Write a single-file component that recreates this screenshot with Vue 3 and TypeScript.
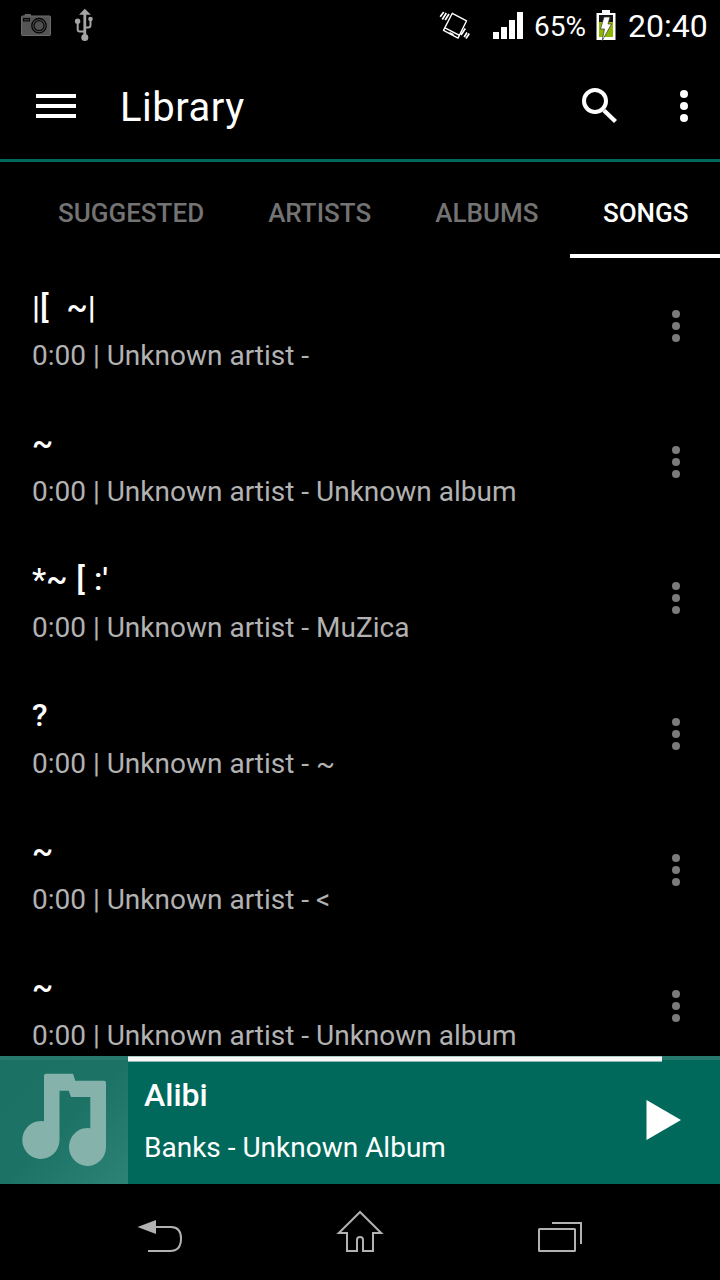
<script setup lang="ts">
interface Song {
  title: string
  detail: string
}

const tabs: string[] = ['SUGGESTED', 'ARTISTS', 'ALBUMS', 'SONGS']
const activeTab = 'SONGS'

const songs: Song[] = [
  { title: '|[  ~|', detail: '0:00 | Unknown artist -' },
  { title: '~', detail: '0:00 | Unknown artist - Unknown album' },
  { title: "*~ [ :'", detail: '0:00 | Unknown artist - MuZica' },
  { title: '?', detail: '0:00 | Unknown artist - ~' },
  { title: '~', detail: '0:00 | Unknown artist - <' },
  { title: '~', detail: '0:00 | Unknown artist - Unknown album' },
]
</script>

<template>
  <div class="screen">
    <header class="status">
      <svg class="status-left" width="110" height="50" viewBox="0 0 110 50">
        <path d="M25 16v-1.500h5.500v1.500" fill="#555" stroke="#666" />
        <rect x="21.500" y="16" width="29" height="19.500" rx="1" fill="#555" stroke="#6c6c6c" />
        <rect x="23.500" y="18.500" width="6" height="2.500" fill="#333" stroke="#080808" />
        <circle cx="39" cy="25.700" r="7.200" fill="#555" stroke="#050505" stroke-width="1.300" />
        <circle cx="39" cy="25.700" r="5" fill="#505050" stroke="#0a0a0a" stroke-width="1.300" />
        <g fill="none" stroke="#a5a5a5" stroke-width="2">
          <path d="M84.800 13v24" stroke-width="2.800" />
          <path d="M77.700 22v7.500q0 2 2 2H84M90.500 20v5q0 2.500-2.500 2.500H85" />
        </g>
        <g fill="#a5a5a5">
          <path d="M84.800 8.800l6 6H79z" />
          <circle cx="84.800" cy="37.500" r="3.500" />
          <circle cx="77.600" cy="21.300" r="2.700" />
          <circle cx="90.500" cy="19" r="2.300" />
        </g>
      </svg>
      <svg class="status-vibrate" width="110" height="50" viewBox="0 0 110 50">
        <g transform="translate(-420 0)" fill="none" stroke="#fff" stroke-width="1.400">
          <path d="M452.300 13.300l14.300 7.500-8.600 17.300-14.500-7.700z" stroke-linejoin="round" />
          <path d="M445 27.800l14.500 7.500M449.500 32.500l4 2.100" />
          <path d="M443.700 12l-3.500 4.800M446.300 13l-4 6.500M449 14l-3.800 6M465.300 28.500l-4.300 6.500M467 32.500l-2.800 4.500M469.300 33.500l-3.300 5" stroke-width="1.700" />
        </g>
        <path d="M73 32h6v7h-6zM81 27h6v12h-6zM89 20h6v19h-6zM97 12h6v27h-6z" fill="#fff" />
      </svg>
      <span class="percent">65%</span>
      <svg class="battery" width="20" height="32" viewBox="0 0 20 32">
        <path d="M6 1h8v3h5.500v27H.500V4H6z" fill="#fff" />
        <path d="M3 6h14v22H3z" fill="#151515" />
        <path d="M3 13h14v15H3z" fill="#8db600" />
        <path d="M8 8h6l-2 7h3.500L6 32l2.500-12H4.500z" fill="#fff" stroke="#333" stroke-width=".7" />
      </svg>
      <span class="clock">20:40</span>
    </header>

    <div class="appbar">
      <svg class="menu" width="40" height="24" viewBox="0 0 40 24">
        <path d="M0 0h40v4H0zM0 10h40v4H0zM0 20h40v4H0z" fill="#fff" />
      </svg>
      <h1>Library</h1>
      <svg class="search" width="36" height="36" viewBox="0 0 36 36" fill="none" stroke="#fff">
        <circle cx="13" cy="13" r="11" stroke-width="4" />
        <path d="M22 22.500L33.500 33.500" stroke-width="4.400" />
      </svg>
      <svg class="more" width="8" height="32" viewBox="0 0 8 32" fill="#fff">
        <circle cx="4" cy="4" r="4" /><circle cx="4" cy="16" r="4" /><circle cx="4" cy="28" r="4" />
      </svg>
    </div>

    <nav class="tabs">
      <span v-for="tab in tabs" :key="tab" class="tab" :class="{ active: tab === activeTab }">{{ tab }}</span>
    </nav>

    <main class="list">
      <div v-for="(song, i) in songs" :key="i" class="row">
        <div class="texts">
          <div class="title">{{ song.title }}</div>
          <div class="detail">{{ song.detail }}</div>
        </div>
        <svg class="dots" width="8" height="32" viewBox="0 0 8 32" fill="#7b7b7b">
          <circle cx="4" cy="4" r="4" /><circle cx="4" cy="16" r="4" /><circle cx="4" cy="28" r="4" />
        </svg>
      </div>
    </main>

    <section class="player">
      <svg class="art" width="128" height="128" viewBox="0 0 128 128">
        <defs>
          <linearGradient id="cover" x1="0" y1="0" x2="1" y2="1">
            <stop offset="0" stop-color="#1a7164" />
            <stop offset=".5" stop-color="#1c7265" />
            <stop offset="1" stop-color="#2d8376" />
          </linearGradient>
        </defs>
        <path d="M0 0h128v128H0z" fill="url(#cover)" />
        <path
          d="M46 17.800H73L75.300 24.800H104Q106 24.800 106 26.800V91A18.500 19 0 1 1 90.300 72.200V41H71L68.700 34.700H59.500V84A18.600 19 0 1 1 44 65.200V19.800Q44 17.800 46 17.800Z"
          fill="#85b2ab"
        />
      </svg>
      <div class="now">
        <div class="now-title">Alibi</div>
        <div class="now-detail">Banks - Unknown Album</div>
      </div>
      <svg class="play" width="35" height="40" viewBox="0 0 35 40">
        <path d="M.500 0L35 20 .500 40z" fill="#fff" />
      </svg>
      <div class="track"><div class="fill"></div></div>
    </section>

    <footer class="nav">
      <svg width="720" height="96" viewBox="0 0 720 96" fill="none" stroke="#b2b2b2" stroke-width="2">
        <path d="M155 43H171C178.500 43 181 48 181 54.500C181 62 178 67 170 67H148" />
        <path d="M137.500 43L156 36v14z" fill="#b2b2b2" stroke="none" />
        <path d="M360 28L338.800 49H347V67H357V56Q357 53 360 53Q363 53 363 56V67H373V49H381.200Z" />
        <rect x="539" y="45" width="36" height="22" rx=".5" />
        <path d="M552 39H581V60" />
      </svg>
    </footer>
  </div>
</template>

<style>
body {
  background: #000;
}
</style>

<style scoped>
.screen {
  width: 720px;
  height: 1280px;
  overflow: hidden;
  background: #000;
  color: #fff;
  font-family: Roboto, "Noto Sans", sans-serif;
  display: flex;
  flex-direction: column;
}
.status {
  height: 50px;
  flex: none;
  display: flex;
  align-items: center;
}
.status-left {
  margin-right: 310px;
}
.percent {
  width: 56px;
  margin-left: 4px;
  font-size: 28px;
  line-height: 34px;
  margin-top: 3px;
  white-space: nowrap;
}
.battery {
  margin-left: 6px;
}
.clock {
  margin-left: 12px;
  font-size: 32px;
  line-height: 40px;
  margin-top: 2px;
}
.appbar {
  height: 112px;
  flex: none;
  box-sizing: border-box;
  border-bottom: 3px solid #00695c;
  display: flex;
  align-items: flex-start;
}
.menu {
  margin: 44px 0 0 36px;
}
h1 {
  margin: 34px 0 0 44px;
  width: 462px;
  font-size: 40px;
  line-height: 48px;
  font-weight: 400;
  letter-spacing: 0.5px;
}
.search {
  margin-top: 38px;
}
.more {
  margin: 40px 0 0 62px;
}
.tabs {
  height: 96px;
  flex: none;
  display: flex;
  padding-left: 26px;
  overflow: hidden;
}
.tab {
  flex: none;
  box-sizing: border-box;
  padding: 0 32px;
  height: 96px;
  line-height: 103px;
  font-size: 26px;
  font-weight: 500;
  color: #737373;
}
.tab.active {
  padding-left: 32.600px;
  color: #fff;
  border-bottom: 4px solid #fff;
}
.list {
  height: 798px;
  flex: none;
  overflow: hidden;
}
.row {
  height: 136px;
  display: flex;
  align-items: center;
  justify-content: space-between;
  padding: 0 40px 0 32px;
}
.texts {
  height: 136px;
  box-sizing: border-box;
  padding-top: 29px;
}
.title,
.now-title {
  font-size: 32px;
  line-height: 40px;
  font-weight: 500;
  white-space: pre;
  word-spacing: 1px;
}
.detail {
  margin-top: 11px;
  font-size: 28px;
  line-height: 36px;
  color: #b2b2b2;
  white-space: pre;
}
.player {
  position: relative;
  height: 128px;
  flex: none;
  background: #00695c;
  display: flex;
  align-items: center;
}
.now {
  height: 128px;
  box-sizing: border-box;
  padding: 19px 0 0 16px;
  width: 518px;
}
.now-detail {
  margin-top: 15px;
  font-size: 28px;
  line-height: 36px;
}
.track {
  position: absolute;
  left: 0;
  right: 0;
  top: 0;
  height: 4px;
  background: #28796d;
}
.fill {
  margin-left: 128px;
  width: 534px;
  height: 6px;
  box-sizing: border-box;
  background: #f7f7f7;
  border-top: 1px solid #a9cbc6;
  border-bottom: 1px solid #8dbab4;
}
.nav {
  height: 96px;
  flex: none;
}
</style>
